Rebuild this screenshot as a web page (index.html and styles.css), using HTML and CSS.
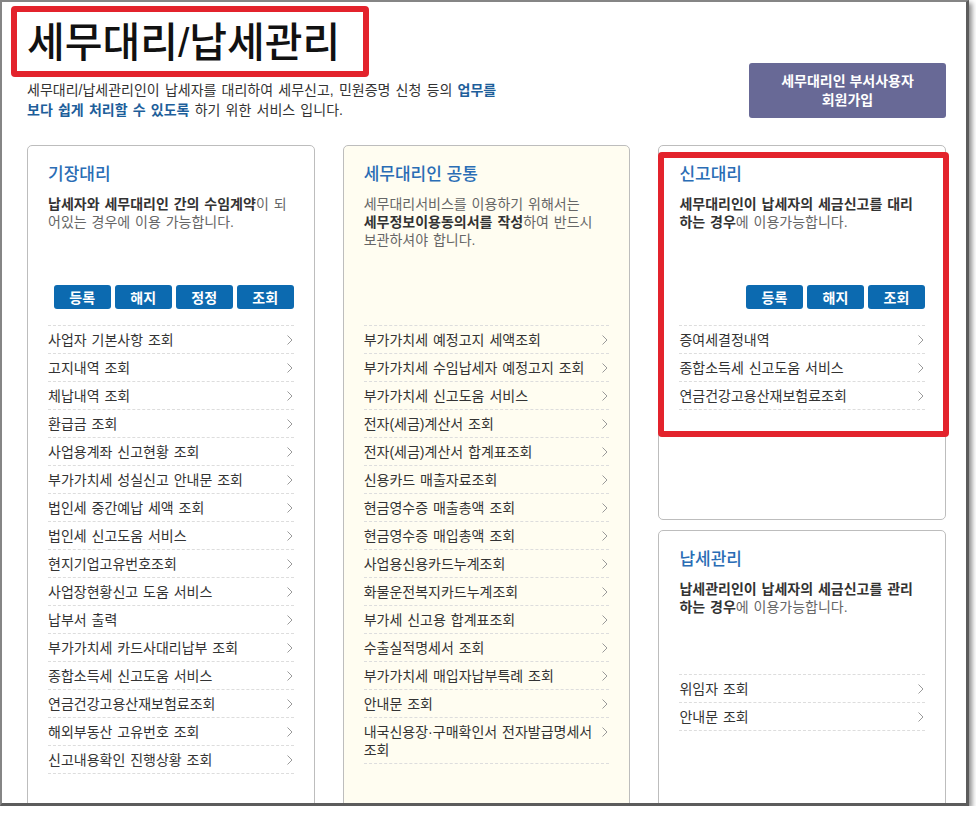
FILE: index.html
```html
<!DOCTYPE html>
<html lang="ko">
<head>
<meta charset="utf-8">
<title>세무대리/납세관리</title>
<link rel="stylesheet" href="styles.css">
</head>
<body>
<div class="frame">
  <div class="page">
    <header class="header">
      <div class="header-text">
        <h1 class="title">세무대리/납세관리</h1>
        <p class="intro">세무대리/납세관리인이 납세자를 대리하여 세무신고, 민원증명 신청 등의 <strong>업무를</strong><br><strong>보다 쉽게 처리할 수 있도록</strong> 하기 위한 서비스 입니다.</p>
      </div>
      <a class="join-btn">세무대리인 부서사용자<br>회원가입</a>
    </header>

    <div class="cards">
      <section class="card">
        <h2 class="card-title">기장대리</h2>
        <p class="card-desc"><b>납세자와 세무대리인 간의 수임계약</b>이 되<br>어있는 경우에 이용 가능합니다.</p>
        <div class="btns"><a class="btn">등록</a><a class="btn">해지</a><a class="btn">정정</a><a class="btn">조회</a></div>
        <ul class="list">
          <li><span>사업자 기본사항 조회</span><svg class="chev" viewBox="0 0 6 10"><polyline points="0.5,0.5 5,5 0.5,9.5"/></svg></li>
          <li><span>고지내역 조회</span><svg class="chev" viewBox="0 0 6 10"><polyline points="0.5,0.5 5,5 0.5,9.5"/></svg></li>
          <li><span>체납내역 조회</span><svg class="chev" viewBox="0 0 6 10"><polyline points="0.5,0.5 5,5 0.5,9.5"/></svg></li>
          <li><span>환급금 조회</span><svg class="chev" viewBox="0 0 6 10"><polyline points="0.5,0.5 5,5 0.5,9.5"/></svg></li>
          <li><span>사업용계좌 신고현황 조회</span><svg class="chev" viewBox="0 0 6 10"><polyline points="0.5,0.5 5,5 0.5,9.5"/></svg></li>
          <li><span>부가가치세 성실신고 안내문 조회</span><svg class="chev" viewBox="0 0 6 10"><polyline points="0.5,0.5 5,5 0.5,9.5"/></svg></li>
          <li><span>법인세 중간예납 세액 조회</span><svg class="chev" viewBox="0 0 6 10"><polyline points="0.5,0.5 5,5 0.5,9.5"/></svg></li>
          <li><span>법인세 신고도움 서비스</span><svg class="chev" viewBox="0 0 6 10"><polyline points="0.5,0.5 5,5 0.5,9.5"/></svg></li>
          <li><span>현지기업고유번호조회</span><svg class="chev" viewBox="0 0 6 10"><polyline points="0.5,0.5 5,5 0.5,9.5"/></svg></li>
          <li><span>사업장현황신고 도움 서비스</span><svg class="chev" viewBox="0 0 6 10"><polyline points="0.5,0.5 5,5 0.5,9.5"/></svg></li>
          <li><span>납부서 출력</span><svg class="chev" viewBox="0 0 6 10"><polyline points="0.5,0.5 5,5 0.5,9.5"/></svg></li>
          <li><span>부가가치세 카드사대리납부 조회</span><svg class="chev" viewBox="0 0 6 10"><polyline points="0.5,0.5 5,5 0.5,9.5"/></svg></li>
          <li><span>종합소득세 신고도움 서비스</span><svg class="chev" viewBox="0 0 6 10"><polyline points="0.5,0.5 5,5 0.5,9.5"/></svg></li>
          <li><span>연금건강고용산재보험료조회</span><svg class="chev" viewBox="0 0 6 10"><polyline points="0.5,0.5 5,5 0.5,9.5"/></svg></li>
          <li><span>해외부동산 고유번호 조회</span><svg class="chev" viewBox="0 0 6 10"><polyline points="0.5,0.5 5,5 0.5,9.5"/></svg></li>
          <li><span>신고내용확인 진행상황 조회</span><svg class="chev" viewBox="0 0 6 10"><polyline points="0.5,0.5 5,5 0.5,9.5"/></svg></li>
        </ul>
      </section>

      <section class="card card-cream">
        <h2 class="card-title">세무대리인 공통</h2>
        <p class="card-desc">세무대리서비스를 이용하기 위해서는<br><b>세무정보이용동의서를 작성</b>하여 반드시<br>보관하셔야 합니다.</p>
        <div class="btns-spacer"></div>
        <ul class="list">
          <li><span>부가가치세 예정고지 세액조회</span><svg class="chev" viewBox="0 0 6 10"><polyline points="0.5,0.5 5,5 0.5,9.5"/></svg></li>
          <li><span>부가가치세 수임납세자 예정고지 조회</span><svg class="chev" viewBox="0 0 6 10"><polyline points="0.5,0.5 5,5 0.5,9.5"/></svg></li>
          <li><span>부가가치세 신고도움 서비스</span><svg class="chev" viewBox="0 0 6 10"><polyline points="0.5,0.5 5,5 0.5,9.5"/></svg></li>
          <li><span>전자(세금)계산서 조회</span><svg class="chev" viewBox="0 0 6 10"><polyline points="0.5,0.5 5,5 0.5,9.5"/></svg></li>
          <li><span>전자(세금)계산서 합계표조회</span><svg class="chev" viewBox="0 0 6 10"><polyline points="0.5,0.5 5,5 0.5,9.5"/></svg></li>
          <li><span>신용카드 매출자료조회</span><svg class="chev" viewBox="0 0 6 10"><polyline points="0.5,0.5 5,5 0.5,9.5"/></svg></li>
          <li><span>현금영수증 매출총액 조회</span><svg class="chev" viewBox="0 0 6 10"><polyline points="0.5,0.5 5,5 0.5,9.5"/></svg></li>
          <li><span>현금영수증 매입총액 조회</span><svg class="chev" viewBox="0 0 6 10"><polyline points="0.5,0.5 5,5 0.5,9.5"/></svg></li>
          <li><span>사업용신용카드누계조회</span><svg class="chev" viewBox="0 0 6 10"><polyline points="0.5,0.5 5,5 0.5,9.5"/></svg></li>
          <li><span>화물운전복지카드누계조회</span><svg class="chev" viewBox="0 0 6 10"><polyline points="0.5,0.5 5,5 0.5,9.5"/></svg></li>
          <li><span>부가세 신고용 합계표조회</span><svg class="chev" viewBox="0 0 6 10"><polyline points="0.5,0.5 5,5 0.5,9.5"/></svg></li>
          <li><span>수출실적명세서 조회</span><svg class="chev" viewBox="0 0 6 10"><polyline points="0.5,0.5 5,5 0.5,9.5"/></svg></li>
          <li><span>부가가치세 매입자납부특례 조회</span><svg class="chev" viewBox="0 0 6 10"><polyline points="0.5,0.5 5,5 0.5,9.5"/></svg></li>
          <li><span>안내문 조회</span><svg class="chev" viewBox="0 0 6 10"><polyline points="0.5,0.5 5,5 0.5,9.5"/></svg></li>
          <li><span><span class="nowrap">내국신용장·구매확인서 전자발급명세서</span><br>조회</span><svg class="chev" viewBox="0 0 6 10"><polyline points="0.5,0.5 5,5 0.5,9.5"/></svg></li>
        </ul>
      </section>

      <div class="col">
        <section class="card card-fixed">
          <h2 class="card-title">신고대리</h2>
          <p class="card-desc"><b>세무대리인이 납세자의 세금신고를 대리<br>하는 경우</b>에 이용가능합니다.</p>
          <div class="btns"><a class="btn">등록</a><a class="btn">해지</a><a class="btn">조회</a></div>
          <ul class="list">
            <li><span>증여세결정내역</span><svg class="chev" viewBox="0 0 6 10"><polyline points="0.5,0.5 5,5 0.5,9.5"/></svg></li>
            <li><span>종합소득세 신고도움 서비스</span><svg class="chev" viewBox="0 0 6 10"><polyline points="0.5,0.5 5,5 0.5,9.5"/></svg></li>
            <li><span>연금건강고용산재보험료조회</span><svg class="chev" viewBox="0 0 6 10"><polyline points="0.5,0.5 5,5 0.5,9.5"/></svg></li>
          </ul>
        </section>
        <section class="card card-fill">
          <h2 class="card-title">납세관리</h2>
          <p class="card-desc"><b>납세관리인이 납세자의 세금신고를 관리<br>하는 경우</b>에 이용가능합니다.</p>
          <ul class="list list-tight">
            <li><span>위임자 조회</span><svg class="chev" viewBox="0 0 6 10"><polyline points="0.5,0.5 5,5 0.5,9.5"/></svg></li>
            <li><span>안내문 조회</span><svg class="chev" viewBox="0 0 6 10"><polyline points="0.5,0.5 5,5 0.5,9.5"/></svg></li>
          </ul>
        </section>
      </div>
    </div>
  </div>

  <div class="mark mark-title"></div>
  <div class="mark mark-card"></div>
</div>
</body>
</html>
```

FILE: styles.css
```css
* { box-sizing: border-box; }

html, body {
  margin: 0;
  padding: 0;
  background: #ffffff;
}

body {
  font-family: "Liberation Sans", "Noto Sans CJK KR", sans-serif;
  color: #333333;
  font-size: 14px;
}

.frame {
  position: relative;
  width: 969px;
  height: 806px;
  border-top: 2px solid #858585;
  border-left: 2px solid #858585;
  border-right: 3px solid #5c5c5c;
  border-bottom: 3px solid #5c5c5c;
  box-shadow: 3px 3px 5px rgba(0, 0, 0, 0.45);
  overflow: hidden;
  background: #ffffff;
}

.page {
  padding: 18px 20px 0 25px;
}

.header {
  display: flex;
  justify-content: space-between;
  align-items: flex-end;
}

.title {
  margin: 0;
  font-size: 41px;
  line-height: 46px;
  font-weight: 500;
  color: #111111;
}

.intro {
  margin: 14px 0 0;
  font-size: 14px;
  line-height: 20px;
  color: #333333;
  word-spacing: 1.3px;
}

.intro strong {
  color: #1d5e9a;
  font-weight: 700;
}

.join-btn {
  display: flex;
  align-items: center;
  justify-content: center;
  text-align: center;
  width: 197px;
  height: 55px;
  margin-bottom: 2px;
  background: #686996;
  border-radius: 3px;
  color: #ffffff;
  font-weight: 700;
  font-size: 14px;
  line-height: 19px;
}

.cards {
  display: flex;
  gap: 28px;
  margin-top: 25px;
  align-items: stretch;
}

.card {
  width: 288px;
  border: 1px solid #bdbdbd;
  border-radius: 5px;
  background: #ffffff;
  padding: 17px 20px 40px 20px;
}

.card-cream {
  background: #fffdf1;
}

.col {
  display: flex;
  flex-direction: column;
  gap: 10px;
  width: 288px;
}

.col .card { width: 100%; }

.card-fixed {
  height: 375px;
  flex: none;
}

.card-fill {
  flex: 1;
}

.card-title {
  margin: 0 0 8px;
  font-size: 17px;
  line-height: 24px;
  font-weight: 500;
  color: #2a6db5;
}

.card-desc {
  margin: 0;
  height: 90px;
  font-size: 14px;
  line-height: 18px;
  color: #666666;
  word-spacing: 1px;
}

.card-desc b {
  color: #333333;
  font-weight: 700;
}

.btns {
  display: flex;
  justify-content: flex-end;
  gap: 4px;
  height: 24px;
  margin-bottom: 16px;
}

.btns-spacer {
  height: 40px;
}

.btn {
  display: flex;
  align-items: center;
  justify-content: center;
  width: 57px;
  height: 24px;
  background: #0c6ab0;
  border-radius: 3px;
  color: #ffffff;
  font-size: 14px;
  font-weight: 700;
}

.list {
  list-style: none;
  margin: 0;
  padding: 0;
  border-bottom: 1px dashed #dddddd;
}

.list-tight {
  margin-top: 4px;
}

.list li {
  display: flex;
  align-items: flex-start;
  justify-content: space-between;
  border-top: 1px dashed #dddddd;
  padding: 5px 0 4px;
  font-size: 14px;
  line-height: 18px;
  color: #333333;
  word-spacing: 1px;
}

.list li > span {
  flex: 1;
  min-width: 0;
}

.nowrap { white-space: nowrap; }

.chev {
  flex: none;
  width: 6px;
  height: 10px;
  margin: 4px 1px 0 6px;
  fill: none;
  stroke: #9a9a9a;
  stroke-width: 1;
}

.mark {
  position: absolute;
  border: 6px solid #e3232c;
  border-radius: 4px;
  pointer-events: none;
}

.mark-title {
  left: 9px;
  top: 4px;
  width: 358px;
  height: 71px;
}

.mark-card {
  left: 656px;
  top: 150px;
  width: 291px;
  height: 285px;
}
```
